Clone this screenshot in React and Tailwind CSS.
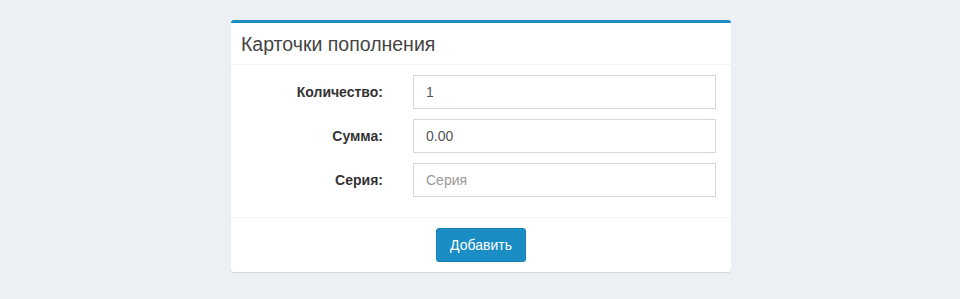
import React from 'react';

const fields = [
  { label: 'Количество:', value: '1' },
  { label: 'Сумма:', value: '0.00' },
  { label: 'Серия:', value: '', placeholder: 'Серия' },
];

export default function App() {
  return (
    <div className="min-h-[299px] bg-[#ecf0f5] pt-[20px] pl-[2px] font-['Liberation_Sans',Arial,sans-serif]">
      <div className="mx-auto w-[500px] rounded-[3px] border-t-[3px] border-[#1c8cc4] bg-white shadow-[0_1px_1px_rgba(0,0,0,0.1)]">
        {/* header */}
        <div className="border-b border-[#f4f4f4] px-[10px] pt-[11px] pb-[10px]">
          <h3 className="text-[19.5px] leading-[20px] text-[#444]">Карточки пополнения</h3>
        </div>

        {/* body */}
        <div className="flex flex-col gap-[10px] pt-[10px] pb-[20px] pr-[15px]">
          {fields.map(f => (
            <div key={f.label} className="flex items-center gap-[30px]">
              <label className="w-[152px] text-right text-[14px] font-bold text-[#333]">{f.label}</label>
              <input
                className="h-[34px] flex-1 border border-[#d2d6de] px-[12px] text-[14px] text-[#555] outline-none placeholder:text-[#999]"
                defaultValue={f.value}
                placeholder={f.placeholder}
              />
            </div>
          ))}
        </div>

        {/* footer */}
        <div className="flex justify-center border-t border-[#f4f4f4] p-[10px]">
          <button className="h-[34px] rounded-[3px] border border-[#1680b3] bg-[#1a8dc4] px-[13px] text-[14px] text-white">
            Добавить
          </button>
        </div>
      </div>
    </div>
  );
}
